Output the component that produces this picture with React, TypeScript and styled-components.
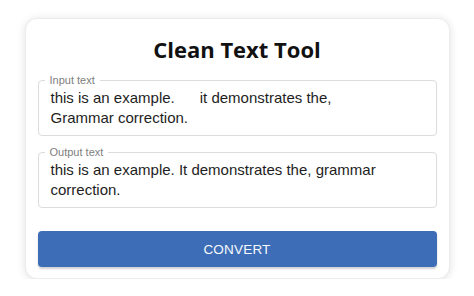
import React from "react";
import styled, { createGlobalStyle } from "styled-components";

const GlobalStyle = createGlobalStyle`
  html, body {
    margin: 0;
    padding: 0;
    background: #ffffff;
  }
  body {
    font-family: "Liberation Sans", Arial, sans-serif;
  }
`;

const Page = styled.div`
  display: flex;
  justify-content: center;
  padding-top: 18px;
`;

const Card = styled.div`
  width: 425px;
  height: 261px;
  box-sizing: border-box;
  background: #ffffff;
  border-radius: 12px;
  border: 1px solid #ececec;
  box-shadow: 0 1px 8px rgba(0, 0, 0, 0.12);
  padding: 15px 12px 9px;
  display: flex;
  flex-direction: column;
`;

const Title = styled.h1`
  margin: 0;
  font-family: "Open Sans", sans-serif;
  font-weight: 700;
  font-size: 22px;
  line-height: 30px;
  color: #111111;
  text-align: center;
`;

const Field = styled.fieldset<{ $mt: number }>`
  margin: ${(p) => p.$mt}px 0 0;
  padding: 2px 12px 7px 12px;
  border: 1px solid #dcdcdc;
  border-radius: 4px;
  min-width: 0;
`;

const Legend = styled.legend`
  margin-left: -6px;
  padding: 0 5px;
  font-size: 11px;
  line-height: 12px;
  color: #808080;
`;

const TextContent = styled.div`
  font-size: 15px;
  line-height: 20px;
  color: #1e1e1e;
  white-space: pre-wrap;
  min-height: 40px;
`;

const ConvertButton = styled.button`
  margin-top: 23px;
  height: 36px;
  border: none;
  border-radius: 4px;
  background: #3d6db6;
  color: #f6f9fd;
  font-family: "Liberation Sans", Arial, sans-serif;
  font-size: 13.5px;
  letter-spacing: 0.2px;
  text-transform: uppercase;
  box-shadow: 0 2px 2px rgba(0, 0, 0, 0.18);
  cursor: pointer;
`;

const inputText =
  "this is an example.      it demonstrates the,\nGrammar correction.";
const outputText =
  "this is an example. It demonstrates the, grammar correction.";

export default function App() {
  return (
    <>
      <GlobalStyle />
      <Page>
        <Card>
          <Title>Clean Text Tool</Title>
          <Field $mt={10}>
            <Legend>Input text</Legend>
            <TextContent>{inputText}</TextContent>
          </Field>
          <Field $mt={10}>
            <Legend>Output text</Legend>
            <TextContent>{outputText}</TextContent>
          </Field>
          <ConvertButton>Convert</ConvertButton>
        </Card>
      </Page>
    </>
  );
}
